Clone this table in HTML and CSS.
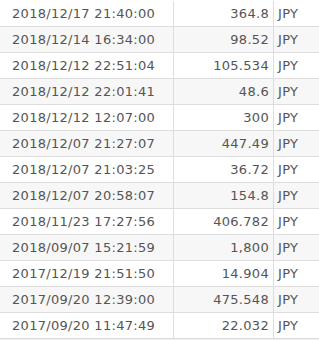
FILE: index.html
```html
<!DOCTYPE html>
<html>
<head>
<meta charset="utf-8">
<link rel="stylesheet" href="styles.css">
</head>
<body>
<div class="wrap">
<table class="tx">
<tbody>
<tr><td class="dt">2018/12/17 21:40:00</td><td class="amt">364.8</td><td class="cur">JPY</td></tr>
<tr><td class="dt">2018/12/14 16:34:00</td><td class="amt">98.52</td><td class="cur">JPY</td></tr>
<tr><td class="dt">2018/12/12 22:51:04</td><td class="amt">105.534</td><td class="cur">JPY</td></tr>
<tr><td class="dt">2018/12/12 22:01:41</td><td class="amt">48.6</td><td class="cur">JPY</td></tr>
<tr><td class="dt">2018/12/12 12:07:00</td><td class="amt">300</td><td class="cur">JPY</td></tr>
<tr><td class="dt">2018/12/07 21:27:07</td><td class="amt">447.49</td><td class="cur">JPY</td></tr>
<tr><td class="dt">2018/12/07 21:03:25</td><td class="amt">36.72</td><td class="cur">JPY</td></tr>
<tr><td class="dt">2018/12/07 20:58:07</td><td class="amt">154.8</td><td class="cur">JPY</td></tr>
<tr><td class="dt">2018/11/23 17:27:56</td><td class="amt">406.782</td><td class="cur">JPY</td></tr>
<tr><td class="dt">2018/09/07 15:21:59</td><td class="amt">1,800</td><td class="cur">JPY</td></tr>
<tr><td class="dt">2017/12/19 21:51:50</td><td class="amt">14.904</td><td class="cur">JPY</td></tr>
<tr><td class="dt">2017/09/20 12:39:00</td><td class="amt">475.548</td><td class="cur">JPY</td></tr>
<tr><td class="dt">2017/09/20 11:47:49</td><td class="amt">22.032</td><td class="cur">JPY</td></tr>
</tbody>
</table>
</div>
</body>
</html>
```
FILE: styles.css
```css
html, body {
  margin: 0;
  padding: 0;
  background: #ffffff;
}
.wrap {
  padding-top: 1px;
}
.tx {
  width: 319px;
  table-layout: fixed;
  border-collapse: separate;
  border-spacing: 0;
  border-bottom: 1px solid #ececec;
  font-family: "DejaVu Sans", Verdana, sans-serif;
  font-size: 13px;
  color: #555555;
}
.tx td {
  height: 25px;
  line-height: 25px;
  padding: 0;
  border-bottom: 1px solid #dddddd;
  white-space: nowrap;
  overflow: hidden;
}
.tx tr:nth-child(even) td {
  background: #f7f7f7;
}
.dt {
  width: 161px;
  padding-left: 12px !important;
  letter-spacing: 0.3px;
}
.amt {
  width: 95px;
  border-left: 1px solid #dddddd;
  text-align: right;
  padding-right: 4px !important;
  letter-spacing: 0.3px;
}
.cur {
  border-left: 1px solid #dddddd;
  padding-left: 4px !important;
  letter-spacing: 0.3px;
}
```
